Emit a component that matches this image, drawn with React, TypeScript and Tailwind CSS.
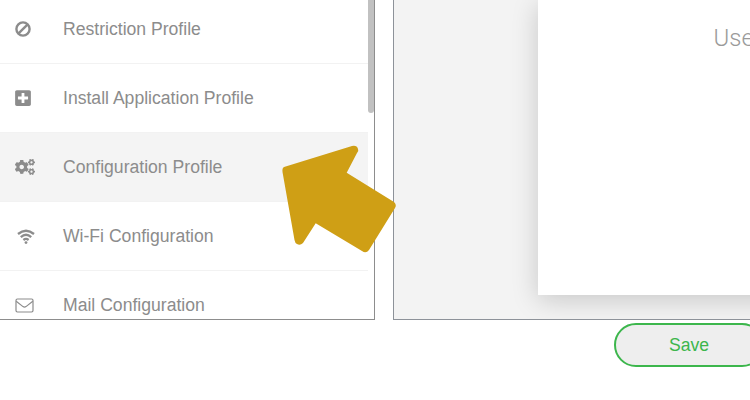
import { FaPlusSquare, FaCogs } from "react-icons/fa";

function Ban() {
  return (
    <svg width="16" height="16" viewBox="0 0 16 16" fill="none" stroke="#8c8c8c" strokeWidth="2.4">
      <circle cx="8" cy="8" r="6.6" />
      <path d="M3.6 12.4 L12.4 3.6" />
    </svg>
  );
}

function Plus() {
  return <FaPlusSquare size={18} className="text-[#8c8c8c] -ml-px" />;
}

function Cogs() {
  return <FaCogs size={20} className="text-[#8c8c8c]" />;
}

function Wifi() {
  return (
    <svg width="18" height="15" viewBox="0 0 18 15" fill="none" stroke="#8c8c8c" strokeWidth="2.3" className="ml-[2px]">
      <path d="M1 5 Q9 -1.6 17 5" />
      <path d="M3.8 8.2 Q9 3.4 14.2 8.2" />
      <path d="M6.4 11 Q9 8.8 11.6 11" />
      <circle cx="9" cy="13.6" r="1.4" fill="#8c8c8c" stroke="none" />
    </svg>
  );
}

function Mail() {
  return (
    <svg width="19" height="15" viewBox="0 0 19 15" fill="none" stroke="#8c8c8c" strokeWidth="1.2">
      <rect x="1" y="1" width="17" height="13" rx="1.4" />
      <path d="M1.2 3.2 L8 8.6 Q9.5 9.6 11 8.6 L17.8 3.2" />
    </svg>
  );
}

const rows = [
  { label: "Restriction Profile", Icon: Ban, active: false },
  { label: "Install Application Profile", Icon: Plus, active: false },
  { label: "Configuration Profile", Icon: Cogs, active: true },
  { label: "Wi-Fi Configuration", Icon: Wifi, active: false },
  { label: "Mail Configuration", Icon: Mail, active: false },
];

export default function App() {
  return (
    <div className="relative w-[750px] h-[400px] overflow-hidden bg-white font-['Liberation_Sans',Arial,sans-serif]">
      <div className="flex h-[320px]">
        <div className="relative w-[375px] shrink-0 overflow-hidden border-r border-b border-[#8d8d8d]">
          <div className="-mt-[5px] w-[368px]">
            {rows.map(({ label, Icon, active }) => (
              <div
                key={label}
                className={`flex items-center h-[69px] border-b border-[#f2f2f2] ${active ? "bg-[#f4f4f4]" : "bg-white"}`}
              >
                <div className="w-[63px] shrink-0 pl-[15px] flex items-center">
                  <Icon />
                </div>
                <span className="text-[#8c8c8c] text-[17.6px]">{label}</span>
              </div>
            ))}
          </div>
          <div className="absolute right-0 top-0 w-[6px] h-[113px] bg-[#c1c1c1] rounded-b-[3px]" />
        </div>
        <div className="ml-[18px] flex-1 overflow-hidden border-l border-b border-[#8d9299] bg-[#f3f3f3] pl-[144px]">
          <div className="w-[400px] h-[295px] bg-white shadow-[0_5px_25px_rgba(0,0,0,0.18)] pl-[175.5px] pt-[20px]">
            <span className="text-[#9a9a9a] text-[24px] font-light font-['Roboto',sans-serif]">Use</span>
          </div>
        </div>
      </div>
      <div className="pl-[614px] pt-[3px]">
        <button className="w-[150px] h-[44px] rounded-[22px] border-2 border-[#3cb64c] bg-[#eeeeee] text-[#3cb64c] text-[17.6px]">
          Save
        </button>
      </div>
      <svg className="absolute left-0 top-0 pointer-events-none" width="750" height="400" viewBox="0 0 750 400">
        <path
          d="M284 167 L352 146 Q357 145 358 149 Q359 151 357 153 L346.7 172.7 L394 202 Q397 205 395 208 L369 250 Q366 254 362 251 L315.7 223.3 L303 243 Q300 246 297 244 Q295 243 294.5 240 L282.5 172 Q282 168 284 167 Z"
          fill="#cf9f15"
        />
      </svg>
    </div>
  );
}
